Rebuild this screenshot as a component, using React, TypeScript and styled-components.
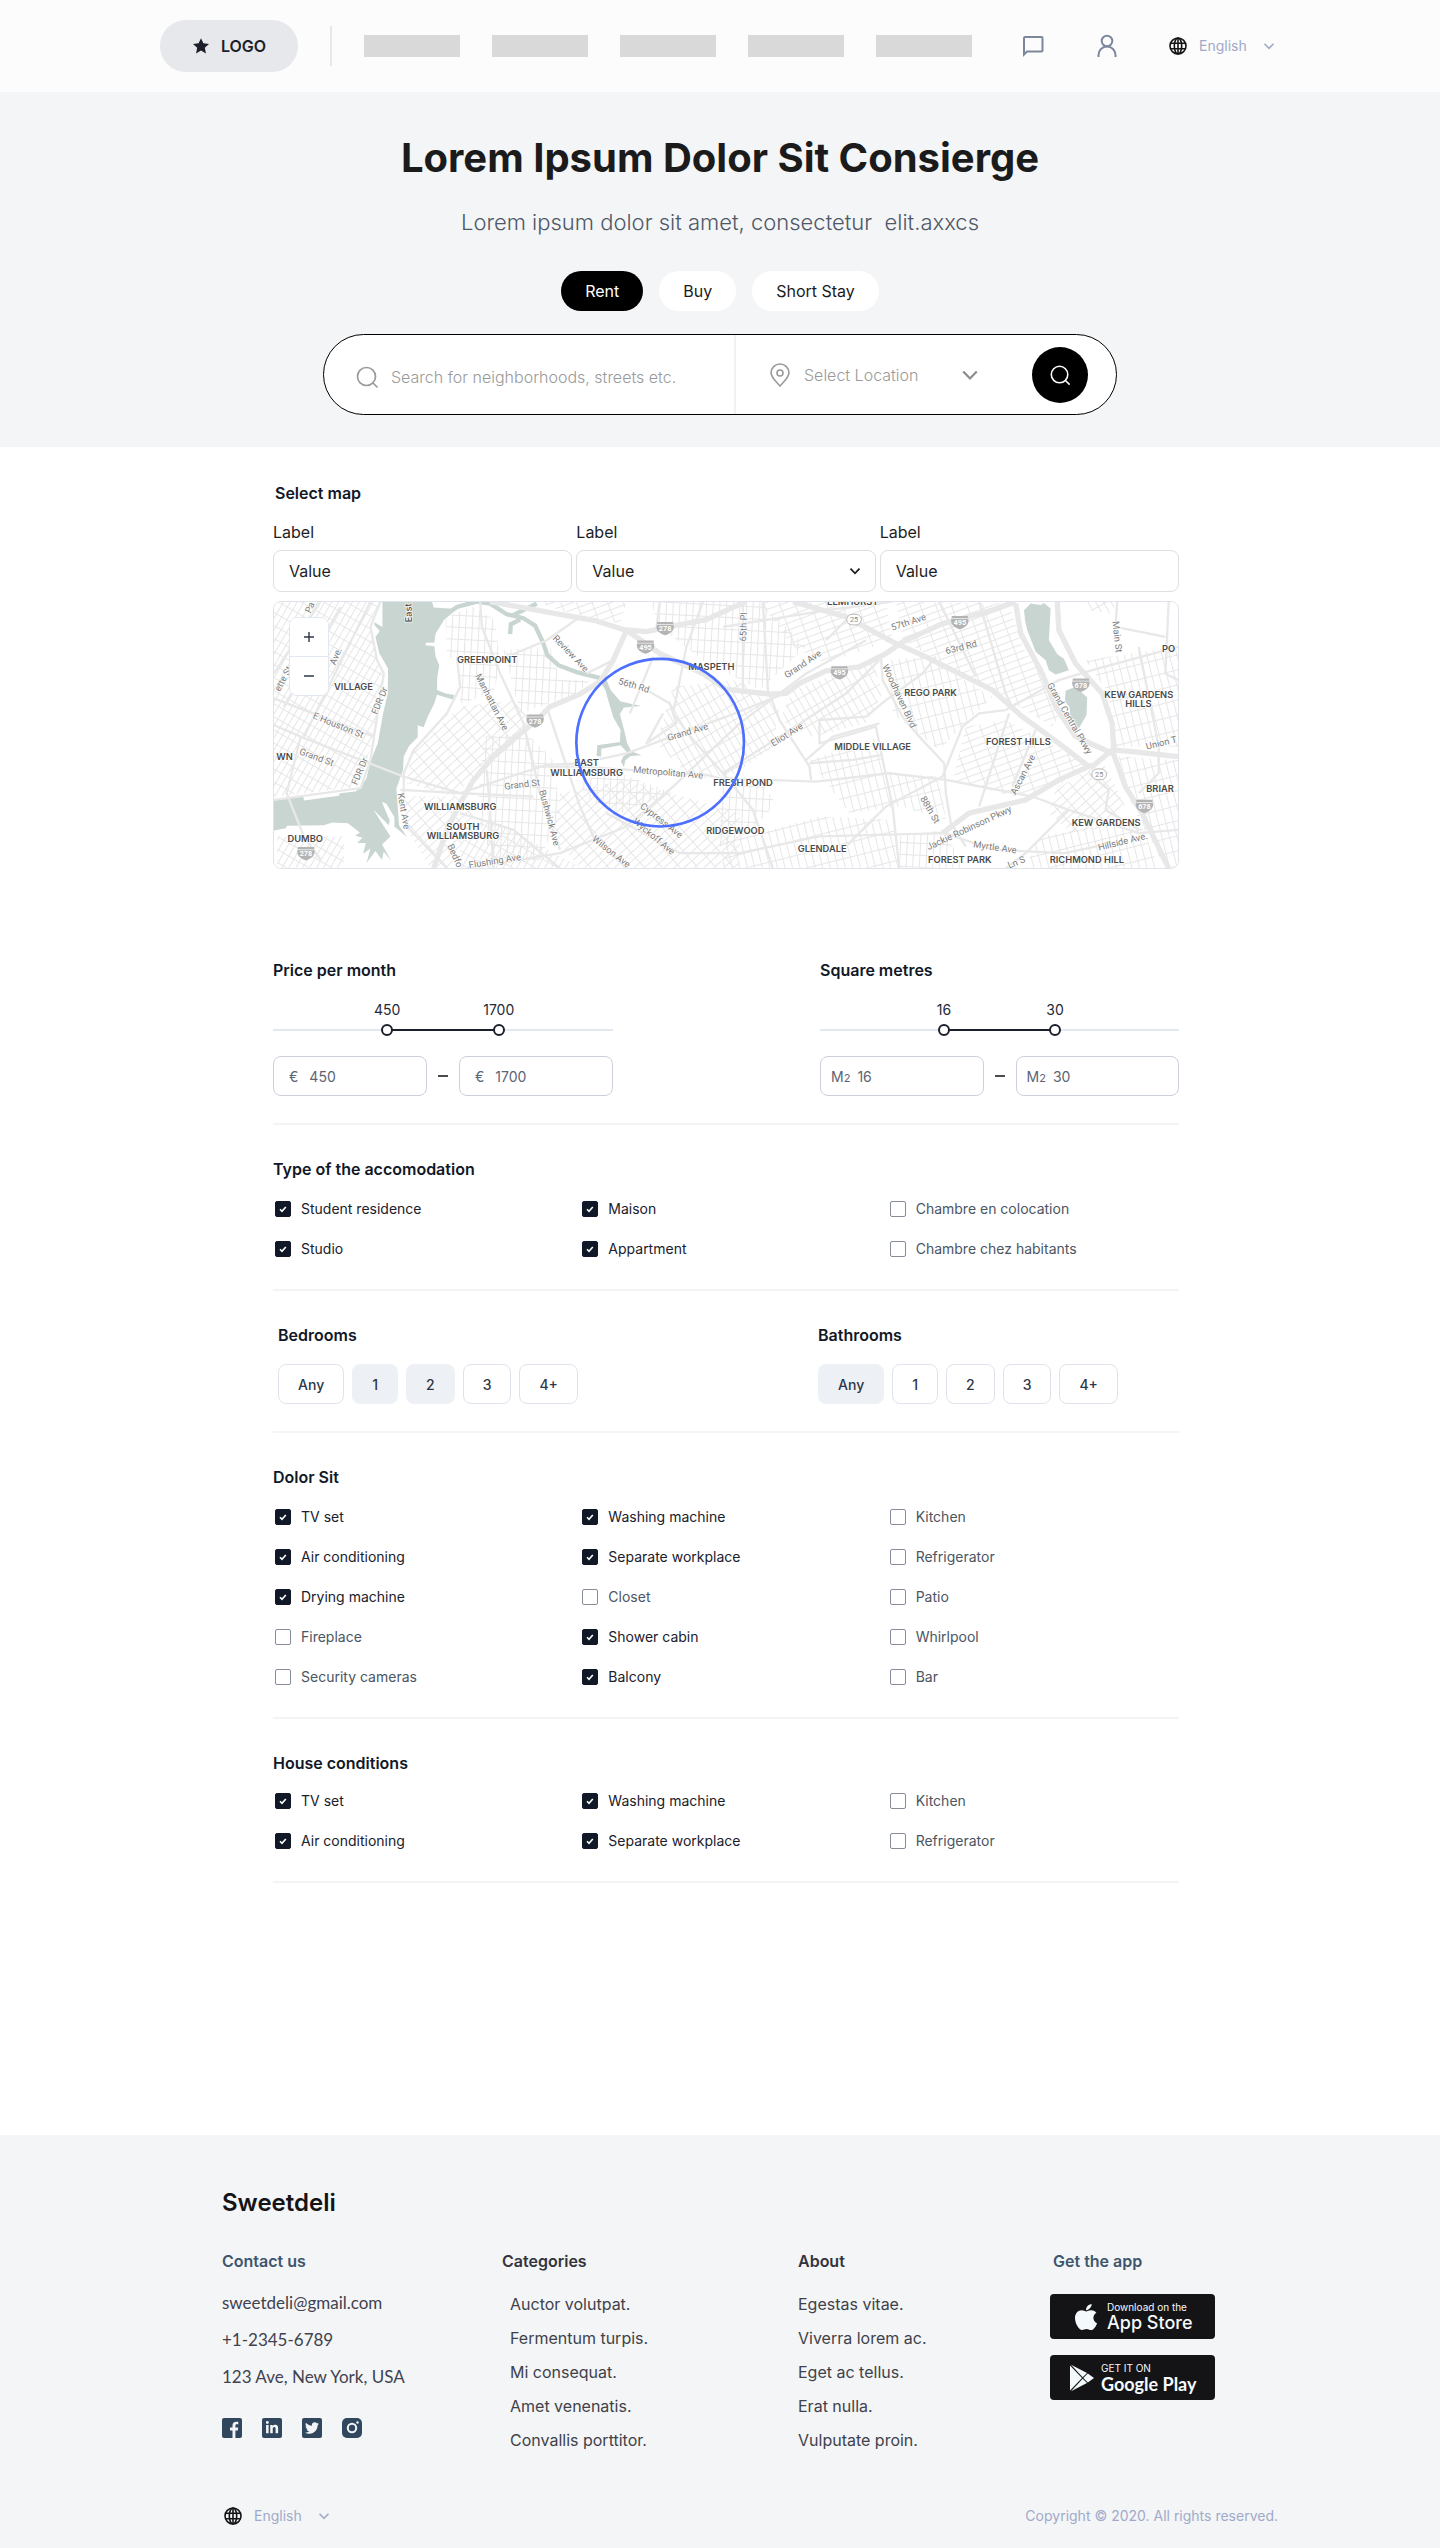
import React, { useId, useState } from "react";
import styled, { createGlobalStyle, css } from "styled-components";
import { FaApple, FaLinkedinIn, FaTwitter } from "react-icons/fa";

const ink = "#111827";
const slate = "#4b5563";
const sans = `Inter, "Liberation Sans", sans-serif`;

const GlobalStyle = createGlobalStyle`
  *, *::before, *::after { box-sizing: border-box; }
  body { margin: 0; background: #fff; font-family: ${sans}; color: ${ink}; }
  h1, h2, h3, p, ul, fieldset { margin: 0; padding: 0; border: 0; }
  ul { list-style: none; }
  a { color: inherit; text-decoration: none; }
  button, input, select { font: inherit; color: inherit; }
  input:focus, select:focus { outline: none; }
  svg { display: block; flex: none; }
`;

/* ---------- Icons ---------- */

const StarIcon = () => (
  <svg width="18" height="18" viewBox="0 0 16 16" fill="#1c1f2a" aria-hidden="true">
    <path d="M8 1l2.1 4.6 5 .6-3.700 3.400 1 5L8 12.100l-4.400 2.500 1-5L.9 6.200l5-.6z" />
  </svg>
);

const ChatIcon = () => (
  <svg width="24" height="24" viewBox="0 0 24 24" fill="none" stroke="#7d879c" strokeWidth="2" aria-hidden="true">
    <path d="M3 20.500V4a1 1 0 0 1 1-1h16.500a1 1 0 0 1 1 1v12.500a1 1 0 0 1-1 1H6z" />
  </svg>
);

const UserIcon = () => (
  <svg width="24" height="24" viewBox="0 0 24 24" fill="none" stroke="#7d879c" strokeWidth="2" aria-hidden="true">
    <circle cx="12" cy="7" r="5.300" />
    <path d="M3.500 23v-2a8.500 8.500 0 0 1 17 0v2" />
  </svg>
);

const GlobeIcon = () => (
  <svg width="18" height="18" viewBox="0 0 18 18" fill="none" stroke="#141416" strokeWidth="1.600" aria-hidden="true">
    <circle cx="9" cy="9" r="8" />
    <ellipse cx="9" cy="9" rx="3.700" ry="8" />
    <path d="M1.500 6.200h15M1.500 11.800h15M9 1v16" />
  </svg>
);

const Chevron = ({ size = 12, color = "currentColor", weight = 2 }) => (
  <svg width={size} height={size} viewBox="0 0 12 12" fill="none" stroke={color} strokeWidth={weight} aria-hidden="true">
    <path d="M1.500 3.700L6 8.300l4.500-4.600" />
  </svg>
);

const SearchIcon = ({ color, size = 24 }: { color: string; size?: number }) => (
  <svg width={size} height={size} viewBox="0 0 24 24" fill="none" stroke={color} strokeWidth="1.700" strokeLinecap="round" aria-hidden="true">
    <circle cx="11.500" cy="11.500" r="9" />
    <path d="M18.500 18.500L22 22" />
  </svg>
);

const PinIcon = () => (
  <svg width="24" height="24" viewBox="0 0 24 24" fill="none" stroke="#9a9a9a" strokeWidth="1.600" aria-hidden="true">
    <path d="M12 23C7 17.500 3 14 3 9.800a9 8.800 0 0 1 18 0C21 14 17 17.500 12 23z" />
    <circle cx="12" cy="10" r="3" />
  </svg>
);

const TickIcon = () => (
  <svg width="16" height="16" viewBox="0 0 16 16" fill="none" stroke="#fff" strokeWidth="1.600" aria-hidden="true">
    <path d="M5 8.300l2 2 3.800-4.300" />
  </svg>
);

const PlayIcon = () => (
  <svg width="26" height="28" viewBox="0 0 26 28" fill="#f4f9fc" aria-hidden="true">
    <path d="M1 1.500L13 14 1 26.500z" />
    <path d="M2 .8L18 9l-4.300 4.300z" />
    <path d="M2 27.200L18 19l-4.300-4.300z" />
    <path d="M18.800 9.400L25 14l-6.200 4.600-4.500-4.600z" />
  </svg>
);

/* ---------- Header ---------- */

const Header = styled.header`
  background: #fcfcfc;
`;

const HeaderInner = styled.div`
  max-width: 1120px;
  height: 92px;
  margin: 0 auto;
  display: flex;
  align-items: center;
  gap: 32px;
  padding-right: 5px;
`;

const LogoLink = styled.a`
  width: 138px;
  height: 52px;
  border-radius: 26px;
  background: #e6e8ec;
  display: flex;
  align-items: center;
  justify-content: center;
  gap: 11px;
  font-size: 16px;
  font-weight: 600;
  color: #1c1f2a;
`;

const HeaderRule = styled.span`
  width: 2px;
  height: 40px;
  background: #e6e8ec;
`;

const Nav = styled.nav`
  display: flex;
  gap: 32px;
`;

const NavItem = styled.a`
  width: 96px;
  height: 22px;
  background: #d9d9d9;
`;

const HeaderTools = styled.div`
  margin-left: auto;
  display: flex;
  align-items: center;
  gap: 50px;
`;

const IconButton = styled.button`
  padding: 0;
  border: 0;
  background: none;
  cursor: pointer;
`;

const LanguageBox = styled.label`
  display: flex;
  align-items: center;
  gap: 12px;
  color: #a0aac8;
`;

const SelectFrame = styled.span`
  display: inline-grid;
  align-items: center;
  > * { grid-area: 1 / 1; }
  > svg { justify-self: end; pointer-events: none; }
`;

const BareSelect = styled.select<{ $tail: number }>`
  appearance: none;
  border: 0;
  margin: 0;
  padding: 0 ${(p) => p.$tail}px 0 0;
  background: none;
  line-height: 20px;
  cursor: pointer;
`;

const LanguageText = styled(BareSelect)`
  font-size: 14px;
`;

const Language = () => (
  <LanguageBox>
    <GlobeIcon />
    <SelectFrame>
      <LanguageText $tail={28} aria-label="Language">
        <option>English</option>
      </LanguageText>
      <Chevron size={12} weight={1.600} />
    </SelectFrame>
  </LanguageBox>
);

/* ---------- Hero ---------- */

const Hero = styled.section`
  background: #f4f5f7;
  padding: 40px 24px 32px;
  display: flex;
  flex-direction: column;
  align-items: center;
`;

const HeroTitle = styled.h1`
  font-size: 40px;
  line-height: 52px;
  font-weight: 700;
  color: #1b1b1b;
`;

const HeroText = styled.p`
  margin-top: 24px;
  font-size: 22px;
  line-height: 28px;
  font-weight: 300;
  color: #4f5867;
`;

const PillRow = styled.div`
  margin-top: 35px;
  display: flex;
  gap: 16px;
`;

const Pill = styled.button<{ $on?: boolean }>`
  height: 40px;
  padding: 0 24px;
  border: 0;
  border-radius: 20px;
  font-size: 16px;
  cursor: pointer;
  background: ${(p) => (p.$on ? "#000" : "#fff")};
  color: ${(p) => (p.$on ? "#fff" : "#1b1b1b")};
`;

const SearchBar = styled.form`
  margin-top: 23px;
  width: 100%;
  max-width: 794px;
  height: 81px;
  display: flex;
  align-items: stretch;
  background: #fff;
  border: 1px solid #000;
  border-radius: 41px;
  color: #9a9a9a;
  font-size: 16px;
  font-weight: 300;
`;

const SearchField = styled.label`
  flex: 1;
  display: flex;
  align-items: center;
  gap: 12px;
  padding: 4px 16px 0 31px;
`;

const SearchInput = styled.input`
  flex: 1;
  min-width: 0;
  padding: 0;
  border: 0;
  background: none;
  &::placeholder { color: #9a9a9a; opacity: 1; }
`;

const LocationField = styled.label`
  width: 298px;
  display: flex;
  align-items: center;
  gap: 12px;
  padding-left: 32px;
  border-left: 2px solid #f0f1f3;
`;

const SearchButton = styled.button`
  align-self: center;
  width: 56px;
  height: 56px;
  margin-right: 28px;
  border: 0;
  border-radius: 50%;
  background: #000;
  display: grid;
  place-items: center;
  cursor: pointer;
`;

/* ---------- Filters ---------- */

const Filters = styled.main`
  max-width: 1440px;
  margin: 0 auto;
  padding: 36px 261px 252px 273px;
`;

const Heading = styled.h2<{ $gap?: number; $inset?: number }>`
  font-size: 16px;
  line-height: 20px;
  font-weight: 600;
  margin-bottom: ${(p) => p.$gap ?? 20}px;
  padding-left: ${(p) => p.$inset ?? 0}px;
`;

const FieldGrid = styled.div`
  display: grid;
  grid-template-columns: repeat(3, 1fr);
  gap: 4px;
  margin-bottom: 9px;
`;

const Field = styled.label`
  display: flex;
  flex-direction: column;
  gap: 8px;
  font-size: 16px;
  line-height: 20px;
  color: #1e1e1e;
`;

const fieldBox = css`
  width: 100%;
  height: 42px;
  padding: 0 15px;
  border: 1px solid #dfdfdf;
  border-radius: 8px;
  background: #fff;
`;

const TextInput = styled.input`
  ${fieldBox}
`;

const FieldSelect = styled.select`
  ${fieldBox}
  appearance: none;
`;

const FieldSelectFrame = styled(SelectFrame)`
  display: grid;
  > svg { margin-right: 15px; }
`;

const MapFrame = styled.div`
  position: relative;
  height: 268px;
  border: 1px solid #dfe3ea;
  border-radius: 8px;
  overflow: hidden;
`;

const MapCanvas = styled.svg`
  width: 100%;
  height: 100%;
`;

const ZoomControl = styled.div`
  position: absolute;
  left: 15px;
  top: 15px;
  width: 40px;
  border: 1px solid #e2e8f0;
  border-radius: 8px;
  overflow: hidden;
  background: #fff;
`;

const ZoomButton = styled.button`
  width: 100%;
  height: 38px;
  padding: 0;
  border: 0;
  background: #fff;
  display: grid;
  place-items: center;
  cursor: pointer;
  & + & { border-top: 1px solid #e2e8f0; height: 39px; }
`;

const Section = styled.section<{ $top?: number; $bottom?: number }>`
  padding: ${(p) => p.$top ?? 34}px 0 ${(p) => p.$bottom ?? 30}px;
  border-bottom: 2px solid #f3f4f6;
`;

const RangeRow = styled.div`
  display: flex;
  justify-content: space-between;
  gap: 32px;
`;

const RangeGroup = styled.fieldset<{ $width: number }>`
  flex: 0 1 ${(p) => p.$width}px;
  min-width: 0;
`;

const Slider = styled.div`
  display: grid;
  grid-template-rows: 20px 12px;
  row-gap: 4px;
  margin-bottom: 20px;
`;

const SliderValue = styled.output`
  grid-area: 1 / 1;
  justify-self: start;
  position: relative;
  transform: translateX(-50%);
  font-size: 14px;
  line-height: 20px;
  color: #1f2937;
`;

const Track = styled.span`
  grid-area: 2 / 1;
  align-self: center;
  height: 2px;
  background: #e2e8f0;
`;

const TrackFill = styled.span`
  display: block;
  height: 100%;
  background: #1a202c;
`;

const thumb = css`
  appearance: none;
  width: 12px;
  height: 12px;
  border: 2px solid #1a202c;
  border-radius: 50%;
  background: #fff;
  pointer-events: auto;
  cursor: pointer;
`;

const SliderInput = styled.input`
  grid-area: 2 / 1;
  z-index: 1;
  appearance: none;
  width: 100%;
  height: 12px;
  margin: 0;
  background: none;
  pointer-events: none;
  &::-webkit-slider-thumb { ${thumb} }
  &::-moz-range-thumb { ${thumb} }
`;

const AmountRow = styled.div`
  display: flex;
  align-items: center;
  gap: 11px;
`;

const Amount = styled.label<{ $inset: number; $gap: number }>`
  flex: 1;
  min-width: 0;
  height: 40px;
  display: flex;
  align-items: center;
  gap: ${(p) => p.$gap}px;
  padding: 0 ${(p) => p.$inset}px;
  border: 1px solid #cbd0dc;
  border-radius: 8px;
  font-size: 14px;
  color: #5b6474;
`;

const AmountInput = styled.input`
  flex: 1;
  min-width: 0;
  width: 20px;
  padding: 0;
  border: 0;
  background: none;
`;

const Small = styled.small`
  font-size: 11px;
`;

const Dash = styled.span`
  width: 10px;
  height: 2px;
  background: #4b4b4b;
`;

const CheckGrid = styled.div`
  display: grid;
  grid-template-columns: repeat(3, 1fr);
  gap: 20px 16px;
`;

const CheckLabel = styled.label`
  display: flex;
  align-items: center;
  gap: 10px;
  padding-left: 2px;
  font-size: 14px;
  line-height: 20px;
  color: ${slate};
  cursor: pointer;
  &:has(input:checked) { color: #1a202c; }
`;

const CheckBox = styled.span`
  display: grid;
  > * { grid-area: 1 / 1; }
  > svg { visibility: hidden; pointer-events: none; }
  > input:checked + svg { visibility: visible; }
`;

const CheckInput = styled.input`
  appearance: none;
  width: 16px;
  height: 16px;
  margin: 0;
  border: 1px solid #868c99;
  border-radius: 2px;
  background: #fff;
  &:checked { background: ${ink}; border-color: ${ink}; }
`;

const ChipColumns = styled.div`
  display: grid;
  grid-template-columns: 540fr 361fr;
  padding-left: 5px;
`;

const ChipRow = styled.div`
  display: flex;
  gap: 8px;
`;

const Chip = styled.button<{ $on: boolean }>`
  height: 40px;
  padding: 0 19px;
  border: 1px solid ${(p) => (p.$on ? "#edf0f5" : "#dfe4ec")};
  border-radius: 8px;
  background: ${(p) => (p.$on ? "#edf0f5" : "#fff")};
  font-size: 14px;
  font-weight: 500;
  color: #2d3748;
  cursor: pointer;
`;

/* ---------- Footer ---------- */

const Footer = styled.footer`
  background: #f4f5f7;
`;

const FooterInner = styled.div`
  max-width: 1440px;
  margin: 0 auto;
  padding: 52px 162px 22px 222px;
`;

const Brand = styled.p`
  font-size: 24px;
  line-height: 32px;
  font-weight: 600;
  color: #141416;
`;

const FooterGrid = styled.div`
  display: grid;
  grid-template-columns: 280fr 296fr 252fr 228fr;
  margin-top: 32px;
`;

const FooterTitle = styled.h3<{ $tone?: string; $inset?: number }>`
  font-size: 16px;
  line-height: 20px;
  font-weight: 600;
  color: ${(p) => p.$tone ?? "#33343c"};
  padding-left: ${(p) => p.$inset ?? 0}px;
`;

const ContactList = styled.ul`
  margin-top: 20px;
  display: flex;
  flex-direction: column;
  gap: 13px;
  font-family: Lato, sans-serif;
  font-size: 17px;
  line-height: 24px;
  color: #40424f;
`;

const LinkList = styled.ul<{ $inset?: number }>`
  margin-top: 23px;
  padding-left: ${(p) => p.$inset ?? 0}px;
  display: flex;
  flex-direction: column;
  gap: 14px;
  font-size: 16px;
  line-height: 20px;
  color: #40424a;
`;

const Socials = styled.div`
  margin-top: 29px;
  display: flex;
  gap: 20px;
`;

const Social = styled.a<{ $round?: boolean }>`
  width: 20px;
  height: 20px;
  border-radius: ${(p) => (p.$round ? 5 : 2)}px;
  background: #30475e;
  color: #f4f5f7;
  display: grid;
  place-items: center;
`;

const Badges = styled.div`
  margin-top: 23px;
  display: flex;
  flex-direction: column;
  gap: 16px;
`;

const StoreBadge = styled.a<{ $left: number }>`
  width: 165px;
  height: 45px;
  padding-left: ${(p) => p.$left}px;
  border-radius: 4px;
  background: #141416;
  color: #f4f9fc;
  display: flex;
  align-items: center;
  gap: 6px;
`;

const BadgeText = styled.span`
  display: flex;
  flex-direction: column;
`;

const BadgeSmall = styled.span`
  font-size: 10px;
  line-height: 12px;
`;

const BadgeLarge = styled.span<{ $font?: string }>`
  font-family: ${(p) => p.$font ?? sans};
  font-size: 18px;
  line-height: 20px;
  font-weight: ${(p) => (p.$font ? 700 : 500)};
`;

const FooterBottom = styled.div`
  margin-top: 56px;
  padding-left: 2px;
  display: flex;
  justify-content: space-between;
  align-items: center;
  font-size: 14px;
  line-height: 20px;
  color: #a0aac8;
`;

/* ---------- Map drawing ---------- */

const WATER = "#c8d5d1";

const streetPatterns: [string, number, number, number][] = [
  ["grid-a", 30, 18, 34],
  ["grid-b", 3, 20, 36],
  ["grid-c", 48, 20, 40],
  ["grid-d", -14, 22, 44],
  ["grid-e", -30, 20, 42],
  ["grid-f", 70, 20, 44],
];

const blocks: [string, string][] = [
  ["grid-a", "40,424 360,424 330,500 350,600 370,660 340,820 320,900 290,980 130,1000 40,1010"],
  ["grid-b", "555,470 640,440 705,480 720,610 700,700 600,730 590,600 560,590"],
  ["grid-c", "600,740 760,720 820,790 640,950 580,1010 440,970 450,880"],
  ["grid-b", "670,830 800,820 880,900 900,1060 840,1200 700,1210 650,1060"],
  ["grid-b", "730,570 870,560 900,660 990,660 950,700 780,760"],
  ["grid-c", "430,1010 620,1010 640,1060 570,1224 510,1224 440,1110"],
  ["grid-a", "600,1100 700,1080 960,1224 600,1224"],
  ["grid-c", "900,1000 1100,960 1440,1060 1440,1224 960,1224 880,1130"],
  ["grid-f", "830,424 1100,424 1080,490 900,450"],
  ["grid-b", "1170,424 1500,424 1640,560 1500,690 1330,600 1200,500"],
  ["grid-e", "1240,680 1440,660 1560,740 1540,860 1430,940 1300,960 1190,850"],
  ["grid-b", "950,960 1080,940 1240,1000 1080,1060 990,1020"],
  ["grid-f", "1500,424 1880,424 1900,540 1700,610 1600,560"],
  ["grid-e", "1600,690 1840,600 1870,700 1820,790 1660,830 1560,780"],
  ["grid-f", "1910,424 2250,430 2290,560 2420,740 2380,800 2200,690 1930,540"],
  ["grid-d", "1880,600 2000,590 2200,710 2120,790 2040,870 1900,760"],
  ["grid-f", "2120,800 2240,780 2480,910 2400,980 2260,1010 2080,960"],
  ["grid-d", "1650,900 1860,830 1880,940 2040,950 2060,1080 1920,1040 1770,1060"],
  ["grid-b", "1380,960 1500,960 1550,1030 1450,1140 1380,1160"],
  ["grid-d", "1390,1150 1680,1070 1900,1080 1920,1224 1390,1224"],
  ["grid-b", "1920,1130 2060,1110 2110,1224 1920,1224"],
  ["grid-d", "2480,600 2758,560 2758,860 2570,860 2550,700"],
  ["grid-e", "2480,424 2570,424 2560,460 2490,450"],
  ["grid-c", "2390,990 2530,900 2600,1040 2560,1100 2440,1120 2370,1060"],
  ["grid-d", "2580,890 2758,900 2758,1224 2720,1224 2620,1040"],
  ["grid-d", "2340,1130 2640,1080 2700,1224 2300,1224"],
  ["grid-a", "50,1130 250,1130 250,1224 50,1224"],
];

const highways = [
  "M690 424L900 462 1010 482 1090 508 1160 514 1250 495 1340 478 1440 432 1460 424",
  "M1100 510L1060 600 1020 665 960 702 870 740 830 780 770 830 700 890 640 960 600 1030 560 1110 520 1226",
  "M1100 510L1200 580 1330 640 1400 688 1530 702 1580 700 1620 670 1700 632 1800 620 1880 580 1930 545 2050 490 2180 456 2270 424",
  "M1600 424L1760 470 1900 545 2000 590 2200 690 2290 770 2400 850 2490 920",
  "M2500 920L2560 870 2620 875 2758 890M2560 870L2600 980 2650 1060 2730 1226",
  "M2270 430L2285 520 2350 640 2390 740 2450 830 2560 880",
  "M2050 1120L2130 1060 2300 1020 2400 960 2500 915",
  "M2395 424L2400 510 2450 610 2530 700 2560 790 2565 870",
];

const avenues = [
  "M40 795L120 830 430 950 600 1000 820 1010",
  "M120 830L78 1000 130 1130 180 1200",
  "M180 424L40 640M330 424L130 830M240 440L70 740M40 715L340 830",
  "M360 424L330 500 350 600 370 640 330 900 300 985 40 1020",
  "M660 424L665 500 720 640 790 790 820 920 960 920",
  "M430 1010L430 940 460 870 560 760 600 680 590 590",
  "M420 990L600 1000 720 960 860 915 960 910 1100 880 1400 770 1600 690",
  "M860 740L900 860 960 1040 1000 1130 1100 1226",
  "M680 930L690 1060 700 1226M800 830L840 1000 900 1170",
  "M440 1100L560 1226M600 1060L760 1110 900 1226",
  "M620 1226L900 1180 1100 1100 1240 980 1440 790 1640 640 1820 540",
  "M960 920L1340 945 1380 955 1670 965 1890 940 2060 960 2320 1010 2430 1050",
  "M740 590L860 540 960 470M980 640L1060 600",
  "M1180 590L1110 760M1200 424L1190 500M1330 424L1280 560 1240 760 1300 840 1390 940 1480 1050 1540 1226",
  "M1040 1060L1260 1180 1440 1180 1680 1130 2060 1120",
  "M1160 690L1230 730 1250 790 1160 850 1210 760",
  "M1450 424L1450 700M1510 424L1525 690 1560 780 1650 920 1655 960",
  "M1390 940L1560 830 1760 700 1860 600",
  "M1390 500L1700 450 1900 424M1700 540L1760 480",
  "M1865 590L1870 660 1930 770 1980 830 2055 910 2060 1000 2075 1090 2120 1160",
  "M1680 780L1680 850 1850 800 1870 900 1900 1040 1920 1226",
  "M1680 780L1820 770 1880 720 1990 640 2030 590",
  "M1640 900L1720 830 1860 790M1650 910L1780 900 1870 885",
  "M1760 1160L1880 1040 2050 950 2110 800 2160 760 2240 750",
  "M2160 424L2240 700 2260 740M2040 424L2150 650",
  "M2250 760L2160 1040M2330 810L2260 980",
  "M2240 750L2400 660 2500 630 2758 560",
  "M2575 424L2570 500 2720 530M2730 424L2720 640 2758 660",
  "M2640 560L2700 860 2700 940 2640 1000",
  "M2430 1050L2380 1100 2300 1180 2240 1226M2430 1050L2640 1120 2758 1110",
  "M2490 940L2550 990 2540 1050 2640 1110",
  "M2060 1120L2200 1170 2420 1180 2600 1140",
];

const places: [number, number, string][] = [
  [681, 610, "GREENPOINT"],
  [279, 690, "VILLAGE"],
  [72, 900, "WN"],
  [134, 1147, "DUMBO"],
  [600, 1052, "WILLIAMSBURG"],
  [608, 1111, "SOUTH"],
  [608, 1139, "WILLIAMSBURG"],
  [980, 918, "EAST"],
  [980, 947, "WILLIAMSBURG"],
  [1355, 631, "MASPETH"],
  [1450, 977, "FRESH POND"],
  [1427, 1123, "RIDGEWOOD"],
  [1688, 1177, "GLENDALE"],
  [1780, 434, "ELMHURST"],
  [2014, 707, "REGO PARK"],
  [1840, 869, "MIDDLE VILLAGE"],
  [2278, 854, "FOREST HILLS"],
  [2102, 1210, "FOREST PARK"],
  [2484, 1210, "RICHMOND HILL"],
  [2542, 1098, "KEW GARDENS"],
  [2640, 713, "KEW GARDENS"],
  [2639, 742, "HILLS"],
  [2730, 574, "PO"],
  [2704, 996, "BRIAR"],
];

const streets: [number, number, number, string][] = [
  [148, 442, -66, "Pa"],
  [68, 656, -62, "ette St"],
  [226, 588, -68, "Ave."],
  [358, 722, -67, "FDR Dr"],
  [298, 934, -67, "FDR Dr"],
  [233, 796, 22, "E Houston St"],
  [168, 892, 20, "Grand St"],
  [430, 1054, 80, "Kent Ave"],
  [695, 726, 63, "Manhattan Ave"],
  [932, 580, 46, "Review Ave"],
  [1122, 676, 17, "56th Rd"],
  [1284, 816, -17, "Grand Ave"],
  [1225, 938, 5, "Metropolitan Ave"],
  [786, 974, -7, "Grand St"],
  [868, 1074, 75, "Bushwick Ave"],
  [584, 1188, 66, "Bedfo"],
  [704, 1204, -9, "Flushing Ave"],
  [1205, 1082, 38, "Cypress Ave"],
  [1182, 1130, 40, "Wyckoff Ave"],
  [1054, 1176, 38, "Wilson Ave"],
  [1452, 500, -88, "65th Pl"],
  [1630, 612, -34, "Grand Ave"],
  [1948, 486, -18, "57th Ave"],
  [2106, 562, -14, "63rd Rd"],
  [1920, 708, 65, "Woodhaven Blvd"],
  [1582, 824, -32, "Eliot Ave"],
  [2012, 1050, 60, "88th St"],
  [2292, 944, -63, "Ascan Ave"],
  [2432, 775, 60, "Grand Central Pkwy"],
  [2575, 530, 84, "Main St"],
  [2708, 849, -14, "Union T"],
  [2130, 1105, -25, "Jackie Robinson Pkwy"],
  [2208, 1163, 8, "Myrtle Ave"],
  [2592, 1146, -14, "Hillside Ave."],
  [2272, 1208, -22, "Ln S"],
];

const shields: [number, number, string][] = [
  [1216, 503, "278"],
  [1157, 559, "495"],
  [825, 781, "278"],
  [136, 1180, "278"],
  [1740, 636, "495"],
  [2102, 485, "495"],
  [2466, 673, "678"],
  [2657, 1038, "678"],
];

const NeighbourhoodMap = () => (
  <MapCanvas viewBox="40 424 2718 802" preserveAspectRatio="xMidYMid slice" role="img" aria-label="Map of Brooklyn and Queens">
    <defs>
      {streetPatterns.map(([id, angle, w, h]) => (
        <pattern key={id} id={id} width={w} height={h} patternUnits="userSpaceOnUse" patternTransform={`rotate(${angle})`}>
          <path d={`M0 0H${w}M0 0V${h}`} stroke="#e6e6e6" strokeWidth="6" fill="none" />
        </pattern>
      ))}
    </defs>
    <rect x="40" y="424" width="2718" height="802" fill="#fff" />
    {blocks.map(([id, points], i) => (
      <polygon key={i} points={points} fill={`url(#${id})`} />
    ))}
    <g fill={WATER}>
      <path d="M366 424L366 500 342 486 342 494 358 512 345 530 357 580 383 625 382 700 368 760 352 850 330 905 318 955 300 982 285 995 238 1000 235 1008 130 1022 128 1010 40 1022V1112L75 1105 80 1098 190 1096 215 1088 262 1090 280 1104 298 1118 284 1128 306 1134 290 1150 316 1150 308 1182 330 1166 318 1210 345 1174 364 1200 370 1176 392 1202 365 1154 390 1130 338 1048 385 1096 388 1082 364 1026 378 1032 402 1072 402 1100 440 1132 416 1096 412 1040 408 985 428 930 430 890 446 858 472 832 472 796 490 802 502 770 522 730 530 704 578 718 582 705 556 700 530 690 531 650 537 615 526 590 522 558 495 555 497 548 522 547 526 520 552 478 590 446 520 442 515 424z" />
      <path d="M1012 645L1040 660 1052 690 1082 724 1145 738 1092 742 1080 762 1092 808 1102 850 1114 874 1145 886 1112 888 1096 902 1092 922 1083 905 1090 890 1104 880 1082 856 1024 866 1024 890 1010 888 1012 856 1080 846 1082 810 1060 772 1036 690z" />
      <path d="M2295 450L2315 430 2345 434 2355 428 2375 445 2370 540 2395 582 2415 596 2430 630 2390 643 2370 630 2360 600 2330 575 2305 510 2298 480z" />
      <path d="M2420 692L2450 680 2485 712 2483 765 2460 805 2435 780 2432 742 2418 722z" />
    </g>
    <path d="M540 475L590 440 650 424 690 430 740 462 790 474 825 496 848 545 862 585 895 615 950 636 1030 656M760 464L830 430M780 478L752 492 750 522" fill="none" stroke={WATER} strokeWidth="13" />
    <g fill="none" stroke="#e8e8e8" strokeLinejoin="round">
      {avenues.map((d) => (
        <path key={d} d={d} strokeWidth="7" />
      ))}
      {highways.map((d) => (
        <path key={d} d={d} strokeWidth="16" />
      ))}
    </g>
    <g fontFamily="Roboto, sans-serif" fontSize="28" fill="#7c7c7c" textAnchor="middle" stroke="#fff" strokeWidth="4" paintOrder="stroke">
      {streets.map(([x, y, angle, name], i) => (
        <text key={i} transform={`translate(${x} ${y}) rotate(${angle})`} dy="9">{name}</text>
      ))}
    </g>
    <g fontFamily="Roboto, sans-serif" fontSize="22" fontWeight="700" textAnchor="middle">
      {shields.map(([x, y, num], i) => (
        <g key={i} transform={`translate(${x} ${y})`}>
          <path d="M-24 -18H24L26 -6C28 8 14 18 0 22 -14 18 -28 8 -26 -6z" fill="#b4b4b4" />
          <path d="M-26 -10H26" stroke="#fff" strokeWidth="2" />
          <text y="10" fill="#fff">{num}</text>
        </g>
      ))}
      {[[1784, 478], [2521, 943]].map(([x, y]) => (
        <g key={x} transform={`translate(${x} ${y})`}>
          <rect x="-22" y="-16" width="44" height="32" rx="16" fill="#fff" stroke="#b9b9b9" strokeWidth="3" />
          <text y="8" fill="#8a8a8a" fontWeight="400">25</text>
        </g>
      ))}
    </g>
    <g fontFamily="Inter, sans-serif" fontSize="28" fontWeight="600" fill="#4a4a4a" textAnchor="middle" stroke="#fff" strokeWidth="4" paintOrder="stroke">
      {places.map(([x, y, name], i) => (
        <text key={i} x={x} y={y}>{name}</text>
      ))}
      <text transform="translate(445 458) rotate(-92)" dy="9" fontWeight="500">East</text>
    </g>
    <circle cx="1201" cy="848" r="252" fill="none" stroke="#4c6fff" strokeWidth="8" />
  </MapCanvas>
);

/* ---------- Filter widgets ---------- */

const Check = ({ label, checked }: { label: string; checked: boolean }) => (
  <CheckLabel>
    <CheckBox>
      <CheckInput type="checkbox" defaultChecked={checked} />
      <TickIcon />
    </CheckBox>
    {label}
  </CheckLabel>
);

/* A leading "*" marks an option that starts ticked. */
const Checks = ({ items }: { items: string[] }) => (
  <CheckGrid>
    {items.map((item) => (
      <Check key={item} label={item.replace("*", "")} checked={item.startsWith("*")} />
    ))}
  </CheckGrid>
);

type Scale = { positions: [number, number]; values: [number, number]; max: number };

const valueAt = ({ positions: [a, b], values: [lo, hi], max }: Scale, p: number) => {
  if (p <= a) return Math.round((p / a) * lo);
  if (p <= b) return Math.round(lo + ((p - a) / (b - a)) * (hi - lo));
  return Math.round(hi + ((p - b) / (100 - b)) * (max - hi));
};

const thumbCentre = (p: number) => `calc(6px + (100% - 12px) * ${p / 100})`;

const Range = ({ title, width, scale, prefix, inset, gap }: {
  title: string; width: number; scale: Scale; prefix: React.ReactNode; inset: number; gap: number;
}) => {
  const [pos, setPos] = useState(scale.positions);
  const names = [`${title} minimum`, `${title} maximum`];
  const move = (i: number, p: number) =>
    setPos(i === 0 ? [Math.min(p, pos[1]), pos[1]] : [pos[0], Math.max(p, pos[0])]);
  return (
    <RangeGroup $width={width}>
      <Heading>{title}</Heading>
      <Slider>
        <Track>
          <TrackFill style={{ marginLeft: thumbCentre(pos[0]), width: `${(pos[1] - pos[0]) * 0.96}%` }} />
        </Track>
        {pos.map((p, i) => (
          <React.Fragment key={i}>
            <SliderValue style={{ left: thumbCentre(p) }}>{valueAt(scale, p)}</SliderValue>
            <SliderInput type="range" aria-label={names[i]} value={p} onChange={(e) => move(i, Number(e.target.value))} />
          </React.Fragment>
        ))}
      </Slider>
      <AmountRow>
        <Amount $inset={inset} $gap={gap}>
          <span>{prefix}</span>
          <AmountInput aria-label={names[0]} value={valueAt(scale, pos[0])} readOnly />
        </Amount>
        <Dash />
        <Amount $inset={inset} $gap={gap}>
          <span>{prefix}</span>
          <AmountInput aria-label={names[1]} value={valueAt(scale, pos[1])} readOnly />
        </Amount>
      </AmountRow>
    </RangeGroup>
  );
};

const Chips = ({ title, initial }: { title: string; initial: string[] }) => {
  const [on, setOn] = useState(initial);
  const toggle = (v: string) => setOn(on.includes(v) ? on.filter((x) => x !== v) : [...on, v]);
  return (
    <div>
      <Heading $gap={19}>{title}</Heading>
      <ChipRow>
        {["Any", "1", "2", "3", "4+"].map((v) => (
          <Chip key={v} type="button" $on={on.includes(v)} aria-pressed={on.includes(v)} onClick={() => toggle(v)}>
            {v}
          </Chip>
        ))}
      </ChipRow>
    </div>
  );
};

const Links = ({ items, inset }: { items: string[]; inset?: number }) => (
  <LinkList $inset={inset}>
    {items.map((item) => (
      <li key={item}><a href="#">{item}</a></li>
    ))}
  </LinkList>
);

export default function App() {
  const [mode, setMode] = useState("Rent");
  const searchId = useId();
  return (
    <>
      <GlobalStyle />
      <Header>
        <HeaderInner>
          <LogoLink href="#"><StarIcon />LOGO</LogoLink>
          <HeaderRule />
          <Nav>
            {[1, 2, 3, 4, 5].map((n) => (
              <NavItem key={n} href="#" aria-label={`Menu item ${n}`} />
            ))}
          </Nav>
          <HeaderTools>
            <IconButton type="button" aria-label="Messages"><ChatIcon /></IconButton>
            <IconButton type="button" aria-label="Account"><UserIcon /></IconButton>
            <Language />
          </HeaderTools>
        </HeaderInner>
      </Header>

      <Hero>
        <HeroTitle>Lorem Ipsum Dolor Sit Consierge</HeroTitle>
        <HeroText>Lorem ipsum dolor sit amet, consectetur&nbsp; elit.axxcs</HeroText>
        <PillRow>
          {["Rent", "Buy", "Short Stay"].map((m) => (
            <Pill key={m} type="button" $on={m === mode} onClick={() => setMode(m)}>{m}</Pill>
          ))}
        </PillRow>
        <SearchBar onSubmit={(e) => e.preventDefault()}>
          <SearchField htmlFor={searchId}>
            <SearchIcon color="#9a9a9a" />
            <SearchInput id={searchId} aria-label="Search" placeholder="Search for neighborhoods, streets etc." />
          </SearchField>
          <LocationField>
            <PinIcon />
            <SelectFrame>
              <BareSelect $tail={60} aria-label="Location">
                <option>Select Location</option>
              </BareSelect>
              <Chevron size={18} color="#8c8c8c" weight={1.500} />
            </SelectFrame>
          </LocationField>
          <SearchButton type="submit" aria-label="Search"><SearchIcon color="#fff" size={22} /></SearchButton>
        </SearchBar>
      </Hero>

      <Filters>
        <Heading $gap={19} $inset={2}>Select map</Heading>
        <FieldGrid>
          <Field>Label<TextInput defaultValue="Value" /></Field>
          <Field>
            Label
            <FieldSelectFrame>
              <FieldSelect><option>Value</option></FieldSelect>
              <Chevron size={12} color="#1e1e1e" weight={1.800} />
            </FieldSelectFrame>
          </Field>
          <Field>Label<TextInput defaultValue="Value" /></Field>
        </FieldGrid>
        <MapFrame>
          <NeighbourhoodMap />
          <ZoomControl>
            <ZoomButton type="button" aria-label="Zoom in">
              <svg width="10" height="10" viewBox="0 0 10 10" stroke="#2d3748" strokeWidth="1.400"><path d="M0 5h10M5 0v10" /></svg>
            </ZoomButton>
            <ZoomButton type="button" aria-label="Zoom out">
              <svg width="10" height="10" viewBox="0 0 10 10" stroke="#2d3748" strokeWidth="1.400"><path d="M0 5h10" /></svg>
            </ZoomButton>
          </ZoomControl>
        </MapFrame>

        <Section $top={91} $bottom={27}>
          <RangeRow>
            <Range title="Price per month" width={340} prefix="€" inset={15} gap={11}
              scale={{ positions: [33, 67], values: [450, 1700], max: 5000 }} />
            <Range title="Square metres" width={359} prefix={<>M<Small>2</Small></>} inset={10} gap={7}
              scale={{ positions: [34, 66], values: [16, 30], max: 100 }} />
          </RangeRow>
        </Section>

        <Section>
          <Heading>Type of the accomodation</Heading>
          <Checks items={["*Student residence", "*Maison", "Chambre en colocation", "*Studio", "*Appartment", "Chambre chez habitants"]} />
        </Section>

        <Section $bottom={27}>
          <ChipColumns>
            <Chips title="Bedrooms" initial={["1", "2"]} />
            <Chips title="Bathrooms" initial={["Any"]} />
          </ChipColumns>
        </Section>

        <Section>
          <Heading>Dolor Sit</Heading>
          <Checks items={[
            "*TV set", "*Washing machine", "Kitchen",
            "*Air conditioning", "*Separate workplace", "Refrigerator",
            "*Drying machine", "Closet", "Patio",
            "Fireplace", "*Shower cabin", "Whirlpool",
            "Security cameras", "*Balcony", "Bar",
          ]} />
        </Section>

        <Section>
          <Heading $gap={18}>House conditions</Heading>
          <Checks items={["*TV set", "*Washing machine", "Kitchen", "*Air conditioning", "*Separate workplace", "Refrigerator"]} />
        </Section>
      </Filters>

      <Footer>
        <FooterInner>
          <Brand>Sweetdeli</Brand>
          <FooterGrid>
            <div>
              <FooterTitle $tone="#3d566e">Contact us</FooterTitle>
              <ContactList>
                <li><a href="mailto:sweetdeli@gmail.com">sweetdeli@gmail.com</a></li>
                <li>+1-2345-6789</li>
                <li>123 Ave, New York, USA</li>
              </ContactList>
              <Socials>
                <Social href="#" aria-label="Facebook">
                  <svg width="20" height="20" viewBox="0 0 20 20" fill="currentColor">
                    <path d="M10.500 20v-7.500H8V9.600h2.500V7.400C10.500 5 12 3.700 14.200 3.700c1 0 1.800.1 2.100.1v2.500h-1.500c-1.200 0-1.400.6-1.400 1.400v1.900h2.800l-.4 2.900h-2.400V20z" />
                  </svg>
                </Social>
                <Social href="#" aria-label="LinkedIn"><FaLinkedinIn size={14} /></Social>
                <Social href="#" aria-label="Twitter"><FaTwitter size={14} /></Social>
                <Social href="#" aria-label="Instagram" $round>
                  <svg width="20" height="20" viewBox="0 0 20 20" fill="none" stroke="currentColor" strokeWidth="2">
                    <circle cx="10" cy="10" r="4.200" />
                    <circle cx="15.500" cy="4.500" r="1.200" fill="currentColor" stroke="none" />
                  </svg>
                </Social>
              </Socials>
            </div>
            <div>
              <FooterTitle>Categories</FooterTitle>
              <Links inset={8} items={["Auctor volutpat.", "Fermentum turpis.", "Mi consequat.", "Amet venenatis.", "Convallis porttitor."]} />
            </div>
            <div>
              <FooterTitle>About</FooterTitle>
              <Links items={["Egestas vitae.", "Viverra lorem ac.", "Eget ac tellus.", "Erat nulla.", "Vulputate proin."]} />
            </div>
            <div>
              <FooterTitle $tone="#3d566e" $inset={3}>Get the app</FooterTitle>
              <Badges>
                <StoreBadge href="#" $left={21}>
                  <FaApple size={30} />
                  <BadgeText>
                    <BadgeSmall>Download on the</BadgeSmall>
                    <BadgeLarge>App Store</BadgeLarge>
                  </BadgeText>
                </StoreBadge>
                <StoreBadge href="#" $left={19}>
                  <PlayIcon />
                  <BadgeText>
                    <BadgeSmall>GET IT ON</BadgeSmall>
                    <BadgeLarge $font="Lato, sans-serif">Google Play</BadgeLarge>
                  </BadgeText>
                </StoreBadge>
              </Badges>
            </div>
          </FooterGrid>
          <FooterBottom>
            <Language />
            <p>Copyright © 2020. All rights reserved.</p>
          </FooterBottom>
        </FooterInner>
      </Footer>
    </>
  );
}
